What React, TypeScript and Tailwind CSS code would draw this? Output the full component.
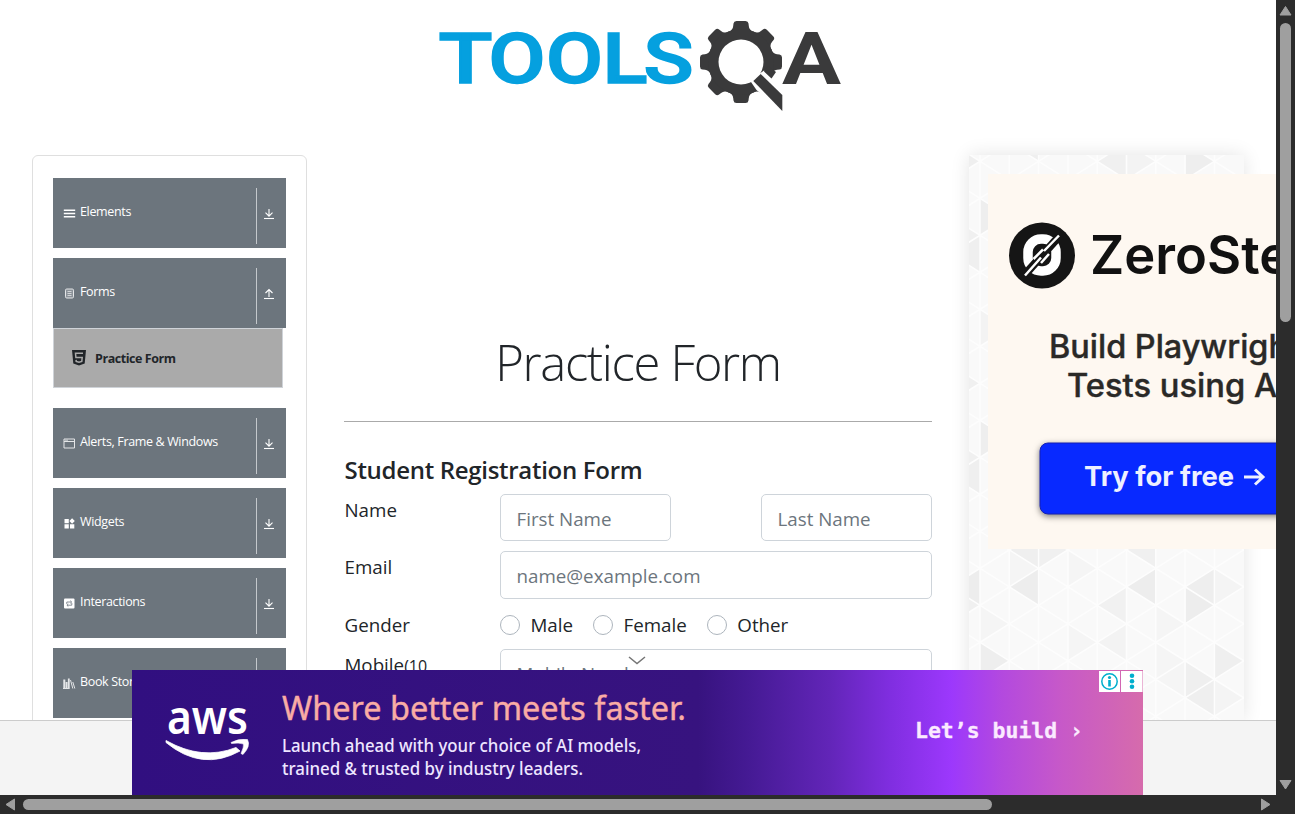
import React from "react";
import { GiHamburgerMenu } from "react-icons/gi";

const SEGOE = "font-['Open_Sans','Noto_Sans',sans-serif]";

const GEAR_TEETH = [0, 45, 90, 135, 180, 225, 270, 315];

function Logo() {
  return (
    <svg className="block h-[140px] w-[440px]" viewBox="420 0 440 140">
      <g fill="#05a0df" stroke="#05a0df" strokeWidth="1.600" fontFamily="Roboto, sans-serif" fontWeight="500" fontSize="69.500">
        <text x="438.500" y="83" textLength="54" lengthAdjust="spacingAndGlyphs">T</text>
        <text x="488.500" y="83" textLength="57" lengthAdjust="spacingAndGlyphs">O</text>
        <text x="546" y="83" textLength="57" lengthAdjust="spacingAndGlyphs">O</text>
        <text x="602.500" y="83" textLength="45" lengthAdjust="spacingAndGlyphs">L</text>
        <text x="643.500" y="83" textLength="50" lengthAdjust="spacingAndGlyphs">S</text>
      </g>
      <text x="782" y="84" fill="#3a3a3b" fontFamily="Roboto, sans-serif" fontWeight="700" fontSize="72" textLength="59" lengthAdjust="spacingAndGlyphs">A</text>
      <g fill="#3a3a3b">
        {GEAR_TEETH.map((a) => (
          <path key={a} transform={`rotate(${a} 741 62)`} d="M728 32 Q733 30 733.200 26 L733.500 23.500 Q733.800 21 736.500 21 H745.500 Q748.200 21 748.500 23.500 L748.800 26 Q749 30 754 32 Z" />
        ))}
        <circle cx="741" cy="62" r="33" />
      </g>
      <circle cx="741" cy="62" r="22.500" fill="#fff" />
      <path d="M750 80.500 L764 70.500 L785 91 V115 L756.500 90 Z" fill="#fff" />
      <path d="M764 71.500 L771.500 78.500 L776 72 L768 66 Z" fill="#3a3a3b" />
      <path d="M753.300 81 L760.700 74 L782.300 95 V111 Z" fill="#3a3a3b" />
    </svg>
  );
}

function ElementsIcon() {
  return <GiHamburgerMenu size={13} />;
}
function FormsIcon() {
  return (
    <svg width="13" height="13" viewBox="0 0 13 13" fill="none" stroke="#e4e6e8">
      <rect x="2.500" y="2" width="8" height="9" rx="1.200" fill="#8b9299" />
      <path d="M4.500 4.500h4M4.500 6.500h4M4.500 8.500h4" strokeWidth=".8" />
    </svg>
  );
}
function WindowIcon() {
  return (
    <svg width="13" height="13" viewBox="0 0 13 13" fill="none" stroke="#e4e6e8">
      <path d="M1 2h10.500v9H1zM1 4.500h10.500" strokeWidth="1" />
      <path d="M2 3.200h3" strokeWidth=".8" />
    </svg>
  );
}
function WidgetsIcon() {
  return (
    <svg width="13" height="13" viewBox="0 0 13 13" fill="#fff">
      <path d="M1.500 2h4.300v4.200H1.500zM1.500 7.200h4.300v4.200H1.500zM7 7.200h4.300v4.200H7zM9.100 1.200l2.700 2.800-2.700 2.700L6.400 4z" />
    </svg>
  );
}
function InteractionsIcon() {
  return (
    <svg width="13" height="13" viewBox="0 0 13 13">
      <rect x="1" y="1.500" width="10.500" height="10" rx="1" fill="#fff" />
      <path d="M3.800 7V5h4.500M7.300 3.700 8.700 5 7.300 6.300M8.800 6v2.200H4.200M5.300 7 3.900 8.200l1.400 1.300" fill="none" stroke="#6c757d" strokeWidth=".8" />
    </svg>
  );
}
function BooksIcon() {
  return (
    <svg width="13" height="13" viewBox="0 0 13 13">
      <path d="M.3 2.500h2v9H.3zM2.700 5h1.800v6.500H2.700zM4.900 1.500h1.800v10H4.900z" fill="#e4e6e8" />
      <path d="M7.500 3l2.300 8.500M9.800 5l2 6.500M0 11.500h6.500" stroke="#e4e6e8" strokeWidth="1" />
    </svg>
  );
}
function Html5Icon() {
  return (
    <svg width="16" height="18" viewBox="0 0 16 18">
      <path d="M1 1h14l-1.300 13.500L8 16.500l-5.700-2z" fill="#212529" />
      <path d="M12 4.300H4.500l.4 4.200h6.300l-.4 3.900-2.800.9-2.800-.9-.1-1.500" fill="none" stroke="#aaa" strokeWidth="1.500" />
    </svg>
  );
}

function Toggle({ up }: { up?: boolean }) {
  return (
    <svg width="12" height="12" viewBox="0 0 12 12" fill="none" stroke="#fff">
      <path d="M1 10.500h10" strokeWidth="1.100" />
      {up ? <path d="M6 9V2M2.500 5 6 1.500 9.500 5" strokeWidth="1.100" /> : <path d="M6 1v7M2.500 4.700 6 8.200l3.500-3.500" strokeWidth="1.100" />}
    </svg>
  );
}

function Group({ icon, label, up }: { icon: React.ReactNode; label: string; up?: boolean }) {
  return (
    <div className="flex h-[70px] w-[233px] shrink-0 bg-[#6c757d] text-white">
      <div className="flex h-[68px] flex-1 items-center pl-[10px]">
        <span className="mt-[3px] w-[13px]">{icon}</span>
        <span className="ml-1 text-[12.500px] tracking-[-0.350px] whitespace-nowrap">{label}</span>
      </div>
      <div className="mt-[10px] flex h-[56px] w-[30px] items-center border-l border-[#c4c8cc] pl-[6px]">
        <span className="-mt-[4px]"><Toggle up={up} /></span>
      </div>
    </div>
  );
}

function Sidebar() {
  return (
    <aside className="flex h-[640px] w-[275px] shrink-0 flex-col gap-[10px] rounded-md border border-[#dfdfdf] px-5 pt-[22px]">
      <Group icon={<ElementsIcon />} label="Elements" />
      <div className="mb-[10px]">
        <Group icon={<FormsIcon />} label="Forms" up />
        <div className="flex h-[60px] w-[230px] items-center border border-[#cfd3d8] bg-[#aaa] pl-[17px] text-[#212529]">
          <Html5Icon />
          <span className="mt-[2px] ml-2 text-[12.500px] font-bold tracking-[-0.450px]">Practice Form</span>
        </div>
      </div>
      <Group icon={<WindowIcon />} label="Alerts, Frame & Windows" />
      <Group icon={<WidgetsIcon />} label="Widgets" />
      <Group icon={<InteractionsIcon />} label="Interactions" />
      <Group icon={<BooksIcon />} label="Book Store Application" />
    </aside>
  );
}

function Field({ className, hint }: { className: string; hint: string }) {
  return (
    <input
      className={`rounded-[5px] border border-[#ced4da] bg-white px-[15.500px] text-[18.750px] text-[#212529] outline-none placeholder:text-[#6c757d] ${className}`}
      placeholder={hint}
    />
  );
}

function Radio({ label }: { label: string }) {
  return (
    <label className="flex items-center">
      <span className="size-5 rounded-full border border-[#adb5bd]" />
      <span className="ml-[10.500px]">{label}</span>
    </label>
  );
}

function PracticeForm() {
  return (
    <section className="w-[588px] shrink-0 pt-[172px] text-[#212529]">
      <h1 className="flex h-[72px] items-center justify-center text-[49px] font-light tracking-[-1.350px] whitespace-nowrap">Practice Form</h1>
      <div className="mt-[22px] border-t border-[#aaa]" />
      <h5 className="mt-[33px] h-[31px] pl-[0.500px] text-[24px] leading-[30px] font-semibold tracking-[-0.300px] whitespace-nowrap">Student Registration Form</h5>
      <div className="mt-2 text-[18.750px] leading-[28px]">
        <div className="flex h-[57px]">
          <span className="w-[156px] pt-[2px] pl-[0.500px]">Name</span>
          <Field className="h-[47px] w-[171px] pt-[2px]" hint="First Name" />
          <Field className="ml-[90px] h-[47px] w-[171px] pt-[2px]" hint="Last Name" />
        </div>
        <div className="flex h-[57px]">
          <span className="w-[156px] pt-[2px] pl-[0.500px]">Email</span>
          <Field className="h-[48px] w-[432px]" hint="name@example.com" />
        </div>
        <div className="flex h-[41px] pt-[2px]">
          <span className="w-[156px] pt-[1px] pl-[0.500px]">Gender</span>
          <div className="flex h-[30px] gap-5">
            <Radio label="Male" />
            <Radio label="Female" />
            <Radio label="Other" />
          </div>
        </div>
        <div className="flex">
          <span className="mr-[40px] w-[116px] pt-[2px] pl-[0.500px]">Mobile<small className="text-[16px]">(10 Digits)</small></span>
          <Field className="h-[48px] w-[432px]" hint="Mobile Number" />
        </div>
      </div>
    </section>
  );
}

const COL = 29.3;
const HALF = 18.5;
const colX = (c: number) => 11 + (c - 1) * COL;
const rowY = (r: number) => 24.8 + r * HALF;

// Shaded cells: apex column, apex row in half steps, side the apex points to, fill.
const SHADED: [number, number, number, string][] = [
  [2, 22, -1, "#ededed"], [6, 22, -1, "#ededed"], [5, 23, -1, "#f1f1f1"], [8, 22, -1, "#eeeeee"],
  [9, 23, 1, "#ededed"], [0, 22, -1, "#ededed"], [1, 23, 1, "#f0f0f0"], [2, 26, 1, "#eeeeee"],
  [10, 26, 1, "#efefef"], [9, 27, 1, "#efefef"], [8, 28, -1, "#efefef"], [5, 25, -1, "#f3f3f3"],
  [5, 25, 1, "#f5f5f5"], [2, 20, -1, "#efefef"], [4, 20, 1, "#f0f0f0"], [6, 20, -1, "#f0f0f0"],
  [5, 21, 1, "#f5f5f5"], [8, 26, 1, "#f5f5f5"], [2, 24, 1, "#f5f5f5"], [8, 24, 1, "#f5f5f5"],
  [10, 22, 1, "#f4f4f4"], [10, 28, 1, "#f4f4f4"], [3, 21, 1, "#f5f5f5"], [7, 27, -1, "#f5f5f5"],
  [5, -1, -1, "#f0f0f0"], [9, -1, 1, "#eeeeee"], [2, -2, -1, "#efefef"], [1, -1, 1, "#efefef"], [7, -1, 1, "#f3f3f3"],
  [2, 2, 1, "#eeeeee"], [1, 3, 1, "#f0f0f0"], [0, 4, -1, "#efefef"], [2, 8, 1, "#f3f3f3"],
  [1, 11, 1, "#f0f0f0"], [2, 14, 1, "#eeeeee"], [1, 15, 1, "#f0f0f0"], [0, 16, -1, "#efefef"],
];

function PatternBackdrop() {
  return (
    <svg className="block h-[565px] w-[275px]" viewBox="0 0 275 565">
      <rect width="275" height="565" fill="#f9f9f9" />
      {SHADED.map(([c, r, dir, fill], i) => (
        <path key={i} d={`M${colX(c)} ${rowY(r)}L${colX(c) - dir * COL} ${rowY(r) - HALF}v${2 * HALF}z`} fill={fill} />
      ))}
      <g stroke="#fdfdfd" strokeWidth="1.500" fill="none">
        {Array.from({ length: 10 }, (_, c) => <path key={c} d={`M${colX(c)} 0V565`} />)}
        {Array.from({ length: 28 }, (_, k) => {
          const y = rowY(2 * k - 12);
          return <path key={k} d={`M${colX(0)} ${y}l${12 * COL} ${12 * HALF}M${colX(0)} ${y}l${12 * COL} ${-12 * HALF}`} />;
        })}
      </g>
    </svg>
  );
}

function SideAd() {
  return (
    <svg className="absolute left-[19px] top-[19px] h-[375px] w-[450px]" viewBox="988 174 450 375" fontFamily="Inter, sans-serif">
      <rect x="988" y="174" width="450" height="375" fill="#fef8f1" />
      <circle cx="1042" cy="255.500" r="33" fill="#151515" />
      <rect x="1028" y="239" width="28" height="32" rx="13" fill="none" stroke="#fff" strokeWidth="9.500" />
      <path d="M1021 279 L1063 232" stroke="#151515" strokeWidth="8" />
      <path d="M1025 275.500 L1041 257.500M1044 251 L1059 235.500M1033.500 259 L1043 249.500M1041 263 L1049 254" stroke="#fff" strokeWidth="2.500" />
      <text x="1090" y="274" fontSize="53" fontWeight="600" fill="#111" textLength="233" lengthAdjust="spacingAndGlyphs">ZeroStep</text>
      <g fontSize="32" fontWeight="500" fill="#2a2927" stroke="#2a2927" strokeWidth=".4">
        <text x="1049" y="358" textLength="250" lengthAdjust="spacingAndGlyphs">Build Playwright</text>
        <text x="1067" y="397" textLength="219" lengthAdjust="spacingAndGlyphs">Tests using AI</text>
      </g>
      <rect x="1040" y="443" width="300" height="71" rx="8" fill="#0829ff" stroke="#1420b4" className="drop-shadow-[0_2px_3px_rgba(0,0,0,0.500)]" />
      <text x="1084" y="486" fontSize="27" fontWeight="700" fill="#eef0ff" textLength="150" lengthAdjust="spacingAndGlyphs">Try for free</text>
      <path d="M1244 477h18M1255 469.500l8 7.500-8 7.500" fill="none" stroke="#eef0ff" strokeWidth="3" />
    </svg>
  );
}

function BannerAd() {
  return (
    <div className="absolute bottom-0 left-[132px] z-20 h-[125px] w-[1011px] bg-[linear-gradient(90deg,#310f80_0%,#37137f_56%,#451a94_61%,#6225b8_69%,#802ee0_75%,#9c38fc_81%,#b349df_86%,#c759c8_92%,#d66bac_100%)]">
      <svg className="absolute -top-4 left-[495px] h-3 w-5" viewBox="0 0 20 12" fill="none" stroke="#757575" strokeWidth="1.500">
        <path d="M2 3l8 6.500L18 3" />
      </svg>
      <svg className="block h-full w-full" viewBox="132 670 1011 125" fontFamily="'Noto Sans', sans-serif">
        <text x="167" y="734" fontSize="47" fontWeight="600" fill="#fff" textLength="81" lengthAdjust="spacingAndGlyphs">aws</text>
        <path d="M166 740.500 Q202 761 236 747.500 L240 751 Q202 772 166 742.500Z" fill="#fff" stroke="#fff" strokeWidth=".8" strokeLinejoin="round" />
        <path d="M231 742.500 Q239 738 247.500 739.500 Q251 746 243 754.500 L241 753.500 Q244 747 243.500 744 Q239 742.500 231.500 743.500Z" fill="#fff" stroke="#fff" strokeWidth=".6" />
        <text x="282" y="720" fontSize="33.500" fontWeight="400" fill="#f9aca5" stroke="#f9aca5" strokeWidth=".4" textLength="404" lengthAdjust="spacingAndGlyphs">Where better meets faster.</text>
        <g fontSize="18.500" fontWeight="500" fill="#eee6ff">
          <text x="282" y="752" textLength="359" lengthAdjust="spacingAndGlyphs">Launch ahead with your choice of AI models,</text>
          <text x="282" y="774.500" textLength="301" lengthAdjust="spacingAndGlyphs">trained &amp; trusted by industry leaders.</text>
        </g>
        <text x="915" y="738" fontFamily="'DejaVu Sans Mono', monospace" fontSize="21" fontWeight="700" fill="#fbeaff" stroke="#fbeaff" strokeWidth=".3" textLength="168" lengthAdjust="spacingAndGlyphs">Let’s build ›</text>
        <path d="M1099 671h21v21h-21zM1121 671h21.500v21H1121z" fill="#fff" />
        <circle cx="1109.500" cy="681.500" r="7.700" fill="none" stroke="#00aecd" strokeWidth="1.500" />
        <path d="M1109.500 680v6.500" stroke="#00aecd" strokeWidth="2.600" />
        <circle cx="1109.500" cy="677.500" r="1.600" fill="#00aecd" />
        <g fill="#00aecd">
          <circle cx="1132" cy="675.800" r="2.300" />
          <circle cx="1132" cy="681.300" r="2.300" />
          <circle cx="1132" cy="686.800" r="2.300" />
        </g>
      </svg>
    </div>
  );
}

export default function App() {
  return (
    <div className={`grid h-[814px] w-[1295px] grid-cols-[1276px_19px] grid-rows-[795px_19px] overflow-hidden bg-[#2c2c2c] ${SEGOE}`}>
      <div className="relative flex flex-col overflow-hidden bg-white">
        <header className="flex h-[155px] shrink-0 pl-[420px]"><Logo /></header>
        <main className="flex h-[565px] shrink-0 items-start pl-8">
          <Sidebar />
          <div className="ml-[37px]"><PracticeForm /></div>
          <div className="relative ml-[37px] w-[275px] shrink-0 shadow-[0_0_18px_rgba(0,0,0,0.110)]">
            <PatternBackdrop />
            <SideAd />
          </div>
        </main>
        <footer className="relative z-10 flex-1 border-t border-[#ccc] bg-[#f4f4f4]" />
        <BannerAd />
      </div>
      <div className="flex flex-col items-center justify-between py-[5px]">
        <svg width="13" height="11" viewBox="0 0 13 11"><path d="M6.500 1.500 12 10H1z" fill="#9f9f9f" stroke="#9f9f9f" strokeLinejoin="round" /></svg>
        <div className="mb-auto mt-[7px] h-[299px] w-[11px] rounded-full bg-[#9f9f9f]" />
        <svg width="13" height="11" viewBox="0 0 13 11"><path d="M6.500 10 12 1.500H1z" fill="#9f9f9f" stroke="#9f9f9f" strokeLinejoin="round" /></svg>
      </div>
      <div className="flex items-center px-[5px]">
        <svg width="11" height="13" viewBox="0 0 11 13"><path d="M1 6.500 9.500 1v11z" fill="#9f9f9f" stroke="#9f9f9f" strokeLinejoin="round" /></svg>
        <div className="ml-[7px] mr-auto h-[11px] w-[969px] rounded-full bg-[#9f9f9f]" />
        <svg width="11" height="13" viewBox="0 0 11 13"><path d="M10 6.500 1.500 1v11z" fill="#9f9f9f" stroke="#9f9f9f" strokeLinejoin="round" /></svg>
      </div>
      <div />
    </div>
  );
}
